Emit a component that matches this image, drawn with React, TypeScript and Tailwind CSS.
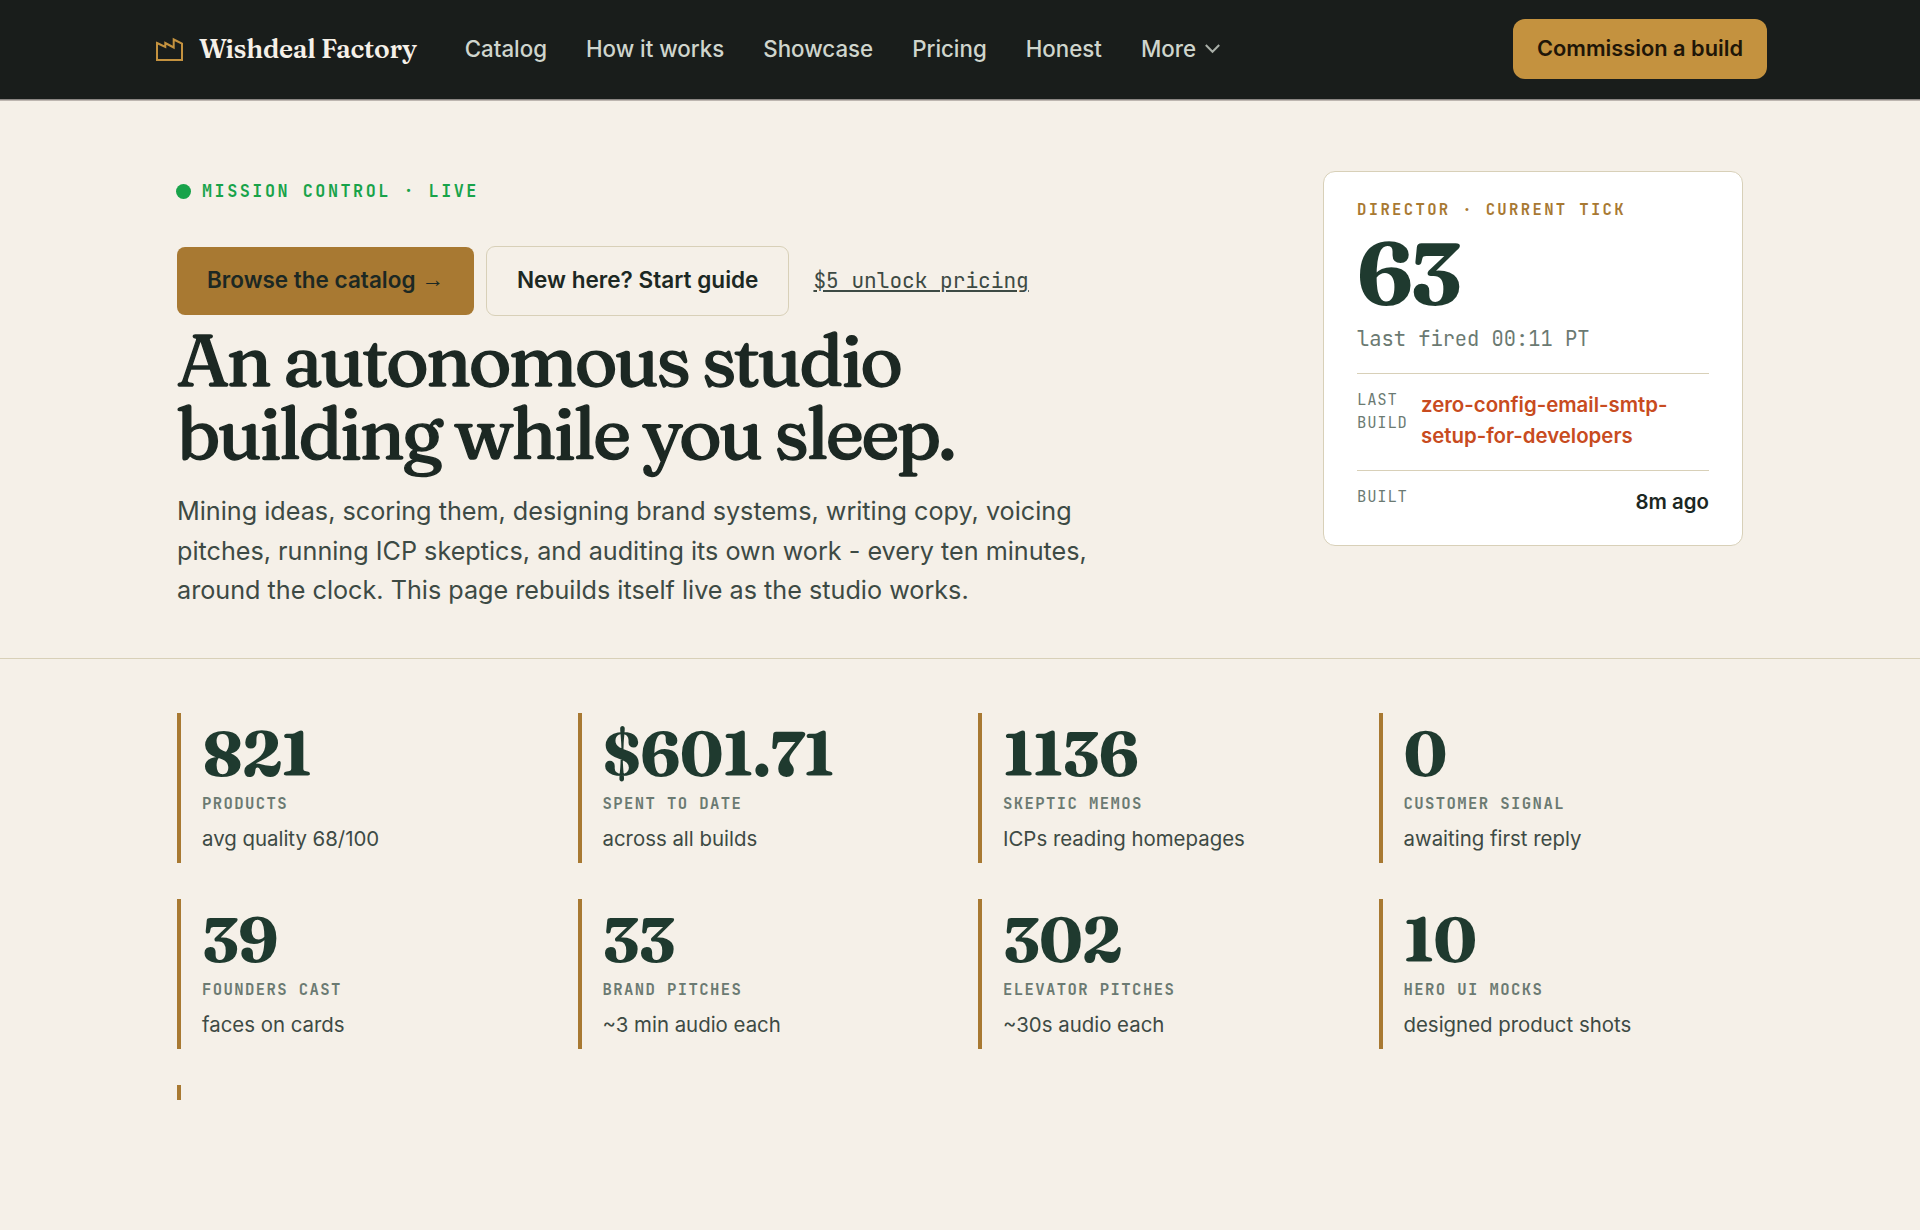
type Stat = { value: string; label: string; note: string };

const NAV = ["Catalog", "How it works", "Showcase", "Pricing", "Honest"];

const STATS: Stat[] = [
  { value: "821", label: "Products", note: "avg quality 68/100" },
  { value: "$601.71", label: "Spent to date", note: "across all builds" },
  { value: "1136", label: "Skeptic memos", note: "ICPs reading homepages" },
  { value: "0", label: "Customer signal", note: "awaiting first reply" },
  { value: "39", label: "Founders cast", note: "faces on cards" },
  { value: "33", label: "Brand pitches", note: "~3 min audio each" },
  { value: "302", label: "Elevator pitches", note: "~30s audio each" },
  { value: "10", label: "Hero UI mocks", note: "designed product shots" },
];

const SERIF = "font-['Fraunces','DejaVu_Serif','Liberation_Serif',serif]";
const MONO = "font-['JetBrains_Mono','DejaVu_Sans_Mono','Liberation_Mono',monospace]";

function FactoryMark() {
  return (
    <svg width="28" height="25" viewBox="0 0 28 25" fill="none" stroke="#c4923f" strokeWidth="2" className="shrink-0">
      <path d="M1 6L9.300 10V6L17.700 10.500V2.500L26 6.700V23H1Z" />
    </svg>
  );
}

function Header() {
  return (
    <header className="h-[101px] bg-[#191d1b] border-b border-[#bdb6b0]">
      <div className="h-[100px] pb-px pl-[156px] pr-[153px] flex items-center border-b border-[#8a8683]">
        <FactoryMark />
        <span className={`${SERIF} ml-[15px] text-[26.250px] font-semibold tracking-[-0.01em] text-[#f5f0e8]`}>Wishdeal Factory</span>
        <nav className="ml-12 flex items-center gap-[39px] text-[22.300px] font-medium text-[#cfd5cd]">
          {NAV.map((n) => (
            <a key={n}>{n}</a>
          ))}
          <a className="flex items-center gap-[9px]">
            More
            <svg width="15" height="10" viewBox="0 0 15 10" fill="none" stroke="#a9afa8" strokeWidth="2">
              <path d="M0.800 1L7.500 7.800L14.200 1" />
            </svg>
          </a>
        </nav>
        <a className="ml-auto h-[60px] px-6 pb-px flex items-center rounded-[12px] bg-[#c4923f] text-[21.800px] font-semibold text-[#1f1608]">
          Commission a build
        </a>
      </div>
    </header>
  );
}

function DirectorCard() {
  return (
    <aside className="w-[420px] h-[375px] rounded-[12px] border border-[#d8d0b8] bg-white px-[33px] pt-[24px]">
      <p className={`${MONO} text-[15.600px] leading-7 font-semibold tracking-[0.15em] text-[#a87932]`}>DIRECTOR · CURRENT TICK</p>
      <p className={`${SERIF} mt-[5px] text-[87px] leading-[88px] font-bold tracking-[-0.035em] text-[#1f3a2f]`}>63</p>
      <p className={`${MONO} mt-1 text-[20.400px] leading-9 text-[#6b7a72]`}>last fired 00:11 PT</p>
      <div className="mt-4 h-[97px] border-t border-[#d8d0b8] pt-[14px] flex gap-[14px]">
        <span className={`${MONO} w-[50px] text-[15.600px] leading-[23px] tracking-[0.05em] text-[#6b7a72]`}>LAST BUILD</span>
        <span className="mt-px text-[20.400px] leading-[31px] font-semibold text-[#c84b20]">
          zero-config-email-smtp-
          <br />
          setup-for-developers
        </span>
      </div>
      <div className="border-t border-[#d8d0b8] pt-[14px] flex justify-between">
        <span className={`${MONO} text-[15.600px] leading-[23px] tracking-[0.05em] text-[#6b7a72]`}>BUILT</span>
        <span className="mt-px text-[20.400px] leading-[31px] font-semibold text-[#1c2823]">8m ago</span>
      </div>
    </aside>
  );
}

export default function App() {
  return (
    <div className="min-h-[1230px] bg-[#f5f0e8] font-['Inter',sans-serif]">
      <Header />
      <section className="h-[558px] border-b border-[#d8d0b8] px-[177px] pt-[70px] flex justify-between">
        <div className="w-[960px]">
          <p className={`${MONO} mt-2 flex items-center gap-[11px] text-[16.800px] leading-[24px] font-semibold tracking-[0.15em] text-[#18a34a]`}>
            <span className="w-[15px] h-[15px] -ml-px rounded-full bg-[#18a34a]" />
            MISSION CONTROL · LIVE
          </p>
          <div className="mt-[43px] flex items-center gap-3 text-[22.500px] font-semibold text-[#1c2823]">
            <a className="h-[68px] px-[30px] pb-[2px] flex items-center gap-[6px] rounded-[8px] bg-[#a87932]">
              Browse the catalog <span className="font-['Liberation_Sans'] font-normal">→</span>
            </a>
            <a className="h-[70px] px-[30px] pb-[2px] flex items-center rounded-[9px] border border-[#d8d0b8] text-[22.560px]">New here? Start guide</a>
            <a className={`${MONO} ml-3 text-[21.120px] font-normal underline text-[#3d4a44]`}>$5 unlock pricing</a>
          </div>
          <h1 className={`${SERIF} mt-2 text-[73px] leading-[72.700px] font-medium tracking-[-2.720px] [-webkit-text-stroke:1.4px_#1c2823] text-[#1c2823] whitespace-nowrap`}>
            An autonomous studio
            <br />
            building while you sleep.
          </h1>
          <p className="mt-[23px] text-[25.200px] leading-[39.400px] text-[#3d4a44]">
            Mining ideas, scoring them, designing brand systems, writing copy, voicing
            <br />
            pitches, running ICP skeptics, and auditing its own work - every ten minutes,
            <br />
            around the clock. This page rebuilds itself live as the studio works.
          </p>
        </div>
        <DirectorCard />
      </section>
      <section className="px-[177px] pt-[54px] grid grid-cols-4 gap-9">
        {STATS.map((s) => (
          <div key={s.label} className="h-[150px] border-l-4 border-[#a87932] pl-[21px] pt-[10px]">
            <p className={`${SERIF} text-[62.400px] leading-[62px] font-bold tracking-[-0.014em] text-[#1f3a2f]`}>{s.value}</p>
            <p className={`${MONO} mt-[7px] text-[15.600px] leading-6 font-semibold tracking-[0.09em] text-[#6b7a72] uppercase`}>{s.label}</p>
            <p className="mt-[7px] text-[20.400px] leading-[31px] text-[#3d4a44]">{s.note}</p>
          </div>
        ))}
        <div className="h-[15px] border-l-4 border-[#a87932]" />
      </section>
    </div>
  );
}
